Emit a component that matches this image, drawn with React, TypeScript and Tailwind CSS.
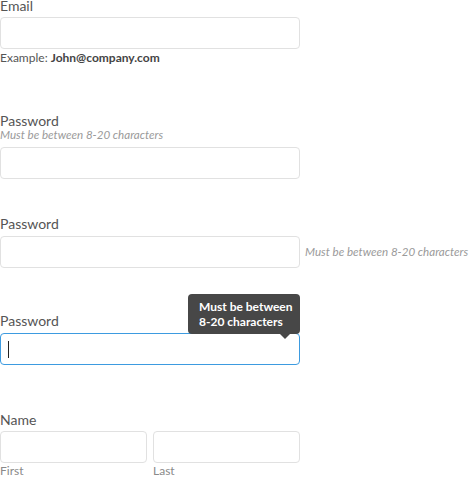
import React from 'react';

const inputCls = 'block h-[32px] w-[300px] rounded-[4px] border border-[#e1e1e1] bg-white outline-none';
const labelCls = 'block text-[14px] leading-[17px] text-[#555]';
const hintCls = 'text-[11.6px] italic leading-[14px] text-[#9a9a9a]';

const App = () => {
    return (
        <div className="min-h-screen bg-white font-['Lato','Noto_Sans',sans-serif] text-[#555]">
            {/* email */}
            <div>
                <label className="block text-[14px] leading-[12px] text-[#555]">Email</label>
                <input type="text" className={`${inputCls} mt-[5px]`} />
                <p className="mt-[2px] text-[12px] leading-[14px] text-[#555]">
                    Example: <span className="font-bold text-[#444]">John@company.com</span>
                </p>
            </div>

            {/* password, hint under label */}
            <div className="mt-[47px]">
                <label className={labelCls}>Password</label>
                <p className={`-mt-[1px] ${hintCls}`}>Must be between 8-20 characters</p>
                <input type="password" className={`${inputCls} mt-[5px]`} />
            </div>

            {/* password, hint at right */}
            <div className="mt-[36px]">
                <label className={labelCls}>Password</label>
                <div className="mt-[4px] flex items-center">
                    <input type="password" className={inputCls} />
                    <span className={`ml-[5px] whitespace-nowrap ${hintCls}`}>Must be between 8-20 characters</span>
                </div>
            </div>

            {/* password, tooltip */}
            <div className="relative mt-[44px]">
                <label className={labelCls}>Password</label>
                <div className="mt-[4px] flex h-[32px] w-[300px] items-center rounded-[4px] border border-[#3d9be0] bg-white pl-[7px]">
                    <span className="h-[17px] w-[1px] bg-[#222]" />
                </div>
                <div className="absolute left-[188px] top-[-18px] w-[112px] whitespace-nowrap rounded-[4px] bg-[#474747] py-[5px] pl-[11px] text-[12px] font-bold leading-[15px] text-white">
                    Must be between
                    <br />
                    8-20 characters
                    <span className="absolute bottom-[-5px] right-[10px] h-0 w-0 border-x-[5px] border-t-[5px] border-x-transparent border-t-[#474747]" />
                </div>
            </div>

            {/* name */}
            <div className="mt-[46px]">
                <label className={labelCls}>Name</label>
                <div className="mt-[3px] flex w-[300px] gap-[6px]">
                    <div className="flex-1">
                        <input type="text" className="block h-[32px] w-full rounded-[4px] border border-[#e1e1e1] bg-white outline-none" />
                        <span className="mt-[1px] block text-[12px] leading-[14px] text-[#8a8a8a]">First</span>
                    </div>
                    <div className="flex-1">
                        <input type="text" className="block h-[32px] w-full rounded-[4px] border border-[#e1e1e1] bg-white outline-none" />
                        <span className="mt-[1px] block text-[12px] leading-[14px] text-[#8a8a8a]">Last</span>
                    </div>
                </div>
            </div>
        </div>
    );
};

export default App;
